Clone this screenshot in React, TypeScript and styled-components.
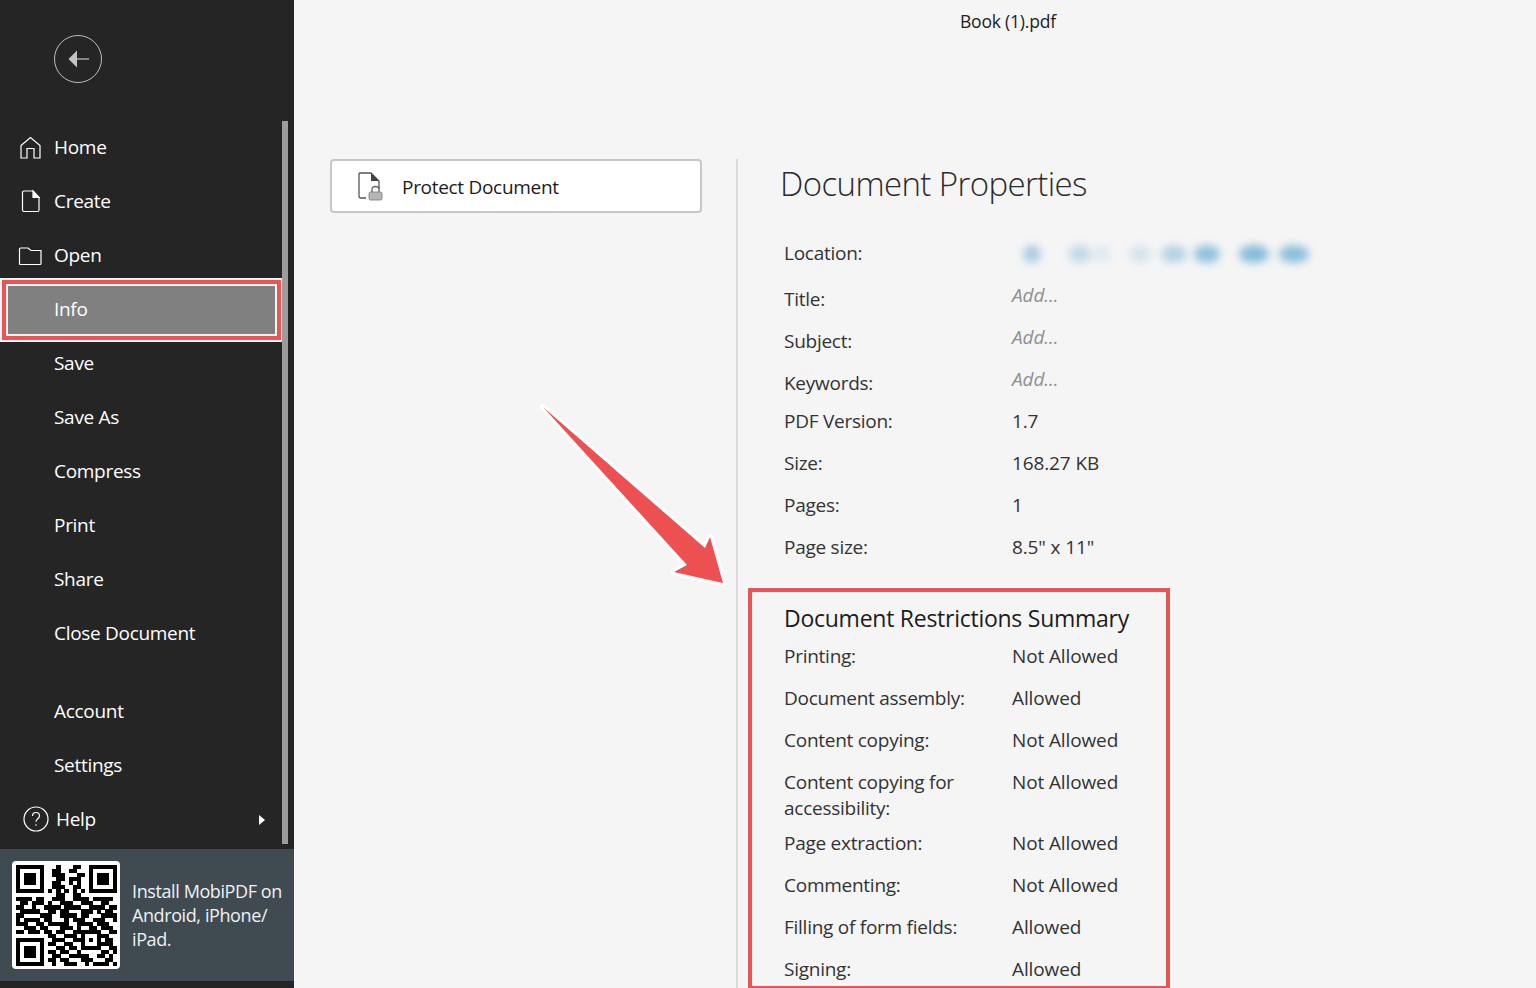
import React from "react";
import styled, { createGlobalStyle } from "styled-components";

const Global = createGlobalStyle`
  html, body { margin: 0; padding: 0; background: #f5f5f5; overflow: hidden; }
  body { font-family: "Open Sans", "Noto Sans", sans-serif; }
`;

const Page = styled.div`
  position: relative;
  display: flex;
  width: 1536px;
  height: 988px;
  overflow: hidden;
  background: #f5f5f5;
`;

const Sidebar = styled.aside`
  position: relative;
  flex: 0 0 294px;
  width: 294px;
  height: 988px;
  background: #252525;
  display: flex;
  flex-direction: column;
`;

const BackRow = styled.div`
  height: 120px;
  padding: 35px 0 0 54px;
  box-sizing: border-box;
`;

const Nav = styled.nav`
  display: flex;
  flex-direction: column;
`;

const NavItem = styled.div<{ $active?: boolean; $gapTop?: number }>`
  position: relative;
  height: 54px;
  margin-top: ${(p) => p.$gapTop ?? 0}px;
  display: flex;
  align-items: center;
  padding-left: 54px;
  width: 282px;
  box-sizing: border-box;
  color: #fff;
  font-size: 19px;
  letter-spacing: -0.3px;
  background: ${(p) => (p.$active ? "#808080" : "transparent")};
`;

const ActiveFrame = styled.div`
  position: absolute;
  left: 0;
  top: -4px;
  width: 283px;
  height: 64px;
  box-sizing: border-box;
  border: 2px solid #f3f3f3;
  pointer-events: none;
  &::before {
    content: "";
    position: absolute;
    inset: 0;
    border: 4px solid #e95454;
  }
  &::after {
    content: "";
    position: absolute;
    inset: 4px;
    border: 2px solid #f3f3f3;
  }
`;

const NavIcon = styled.svg<{ $left?: number }>`
  position: absolute;
  left: ${(p) => p.$left ?? 18}px;
  top: 14px;
  width: 26px;
  height: 26px;
  fill: none;
  stroke: #fff;
  stroke-width: 1.2;
`;

const HelpLabel = styled.span`
  margin-left: 2px;
`;

const Caret = styled.span`
  position: absolute;
  left: 259px;
  top: 23px;
  width: 0;
  height: 0;
  border-left: 6px solid #fff;
  border-top: 5px solid transparent;
  border-bottom: 5px solid transparent;
`;

const Scrollbar = styled.div`
  position: absolute;
  left: 282px;
  top: 121px;
  width: 6px;
  height: 723px;
  background: #9c9c9c;
`;

const Promo = styled.div`
  position: absolute;
  left: 0;
  top: 849px;
  width: 294px;
  height: 132px;
  background: #3f4a51;
  display: flex;
  align-items: center;
  padding-left: 12px;
  box-sizing: border-box;
  gap: 12px;
`;

const QrCard = styled.div`
  width: 108px;
  height: 108px;
  background: #fff;
  border-radius: 4px;
  display: flex;
  align-items: center;
  justify-content: center;
  flex: none;
`;

const PromoText = styled.div`
  color: #f0f2f3;
  font-size: 18px;
  line-height: 24px;
  letter-spacing: -0.4px;
  width: 156px;
`;

const Main = styled.main`
  flex: 1;
  position: relative;
  display: flex;
  flex-direction: column;
`;

const FileName = styled.div`
  height: 159px;
  box-sizing: border-box;
  padding-top: 9px;
  padding-left: 666px;
  font-size: 17.5px;
  line-height: 24px;
  letter-spacing: -0.2px;
  color: #222;
`;

const Columns = styled.div`
  display: flex;
  flex: 1;
`;

const LeftCol = styled.div`
  width: 444px;
  box-sizing: border-box;
  padding-left: 36px;
  border-right: 2px solid #dcdcdc;
`;

const ProtectButton = styled.div`
  width: 372px;
  height: 54px;
  box-sizing: border-box;
  border: 2px solid #c6c6c6;
  border-radius: 4px;
  background: #fff;
  display: flex;
  align-items: center;
  padding: 2px 0 0 24px;
  gap: 18px;
  font-size: 19px;
  letter-spacing: -0.3px;
  color: #1c1c1c;
`;

const ProtectIcon = styled.svg`
  margin-top: -2px;
`;

const RightCol = styled.div`
  flex: 1;
  padding-left: 42px;
`;

const Heading = styled.h1`
  margin: 0;
  font-size: 33px;
  font-weight: 300;
  line-height: 50px;
  letter-spacing: -0.6px;
  color: #2b2b2b;
`;

const Props = styled.div`
  padding: 0 0 0 4px;
  margin-top: 31px;
`;

const Row = styled.div<{ $h: number }>`
  display: grid;
  grid-template-columns: 228px 1fr;
  height: ${(p) => p.$h}px;
  font-size: 19px;
  line-height: 26px;
  letter-spacing: -0.26px;
  color: #333;
`;

const Value = styled.span`
  letter-spacing: -0.12px;
`;

const Placeholder = styled.span`
  font-style: italic;
  color: #8f8f8f;
  letter-spacing: -0.1px;
  transform: translateY(-4px);
`;

const Blurred = styled.svg`
  width: 320px;
  height: 40px;
  margin: -7px 0 0 -12px;
`;

const RestrictBox = styled.section`
  position: absolute;
  left: 454px;
  top: 588px;
  width: 422px;
  height: 400px;
  box-sizing: border-box;
  border: 4px solid #e95454;
  border-bottom-width: 2px;
  outline: 1px solid #fbfbfb;
  padding: 11px 0 0 32px;
`;

const RestrictTitle = styled.div`
  font-size: 23px;
  line-height: 30px;
  letter-spacing: -0.26px;
  color: #1c1c1c;
  margin-bottom: 10px;
`;

const Arrow = styled.svg`
  position: absolute;
  left: 240px;
  top: 395px;
  width: 200px;
  height: 200px;
  overflow: visible;
`;

const qrRows = [
  "1111111" + "00010001100" + "1111111",
  "1000001" + "00110011000" + "1000001",
  "1011101" + "00111000110" + "1011101",
  "1011101" + "00011011100" + "1011101",
  "1011101" + "00110010100" + "1011101",
  "1000001" + "00111001100" + "1000001",
  "1111111" + "01010101010" + "1111111",
  "0000000" + "00011001100" + "0000000",
  "1111011001110011110111110",
  "0110111010011100111001100",
  "1100100111101111001111011",
  "0111110011011000111010110",
  "1100001110011110110001111",
  "1011110110001011100111001",
  "1110011011111001111011100",
  "0011101100011101001101110",
  "1101110110110011" + "11111" + "0011",
  "00000000" + "11001110" + "10001" + "1100",
  "1111111" + "0" + "01110011" + "10101" + "0110",
  "1000001" + "0" + "11001100" + "10001" + "1110",
  "1011101" + "0" + "00110110" + "11111" + "0011",
  "1011101" + "0" + "11011001" + "00000" + "1101",
  "1011101" + "0" + "01100111" + "11001" + "1010",
  "1000001" + "0" + "11011000" + "11100" + "0110",
  "1111111" + "0" + "01001110" + "01011" + "1101",
];

function QrCode() {
  const n = qrRows.length;
  return (
    <svg width="101" height="101" viewBox={`0 0 ${n} ${n}`} shapeRendering="crispEdges">
      {qrRows.flatMap((r, y) =>
        r.split("").map((c, x) => (c === "1" ? <rect key={`${x}-${y}`} x={x} y={y} width="1.02" height="1.02" fill="#000" /> : null))
      )}
    </svg>
  );
}

const rows1: [string, string, number][] = [
  ["PDF Version:", "1.7", 42],
  ["Size:", "168.27 KB", 42],
  ["Pages:", "1", 42],
  ["Page size:", '8.5" x 11"', 42],
];

const rows2: [React.ReactNode, string, number][] = [
  ["Printing:", "Not Allowed", 42],
  ["Document assembly:", "Allowed", 42],
  ["Content copying:", "Not Allowed", 42],
  [<>Content copying for<br />accessibility:</>, "Not Allowed", 61],
  ["Page extraction:", "Not Allowed", 42],
  ["Commenting:", "Not Allowed", 42],
  ["Filling of form fields:", "Allowed", 42],
  ["Signing:", "Allowed", 42],
];

const blobs: [number, number, number][] = [
  [32, 9, 0.5], [80, 11, 0.34], [102, 9, 0.14], [140, 11, 0.2], [174, 13, 0.42], [207, 13, 0.65], [254, 15, 0.72], [294, 15, 0.68],
];

export default function App() {
  return (
    <Page>
      <Global />
      <Sidebar>
        <BackRow>
          <svg width="48" height="48" viewBox="0 0 48 48" fill="none">
            <circle cx="24" cy="24" r="23.5" stroke="#bdbdbd" strokeWidth="1" />
            <path d="M14.500 24 L23 15.500 V32.500 Z" fill="#c4c4c4" />
            <path d="M22 24 H35" stroke="#c4c4c4" strokeWidth="1.2" />
          </svg>
        </BackRow>
        <Nav>
          <NavItem>
            <NavIcon viewBox="0 0 26 26">
              <path d="M3 11.5 L12.5 3.5 L22 11.5 V24 H16 V14.500 H9 V24 H3 Z" />
            </NavIcon>
            Home
          </NavItem>
          <NavItem>
            <NavIcon viewBox="0 0 26 26">
              <path d="M4.500 4.500 Q4.500 3 6 3 H15 L21 9.5 V22 Q21 23.500 19.500 23.500 H6 Q4.500 23.500 4.500 22 Z" />
              <path d="M15 3 L21 9.5 H15 Z" fill="#fff" />
            </NavIcon>
            Create
          </NavItem>
          <NavItem>
            <NavIcon viewBox="0 0 26 26">
              <path d="M1.500 7 Q1.500 6 2.500 6 H10 L13 8.500 H23 V21.500 Q23 22.500 22 22.500 H2.500 Q1.500 22.500 1.500 21.500 Z" />
            </NavIcon>
            Open
          </NavItem>
          <NavItem $active>
            Info
            <ActiveFrame />
          </NavItem>
          <NavItem>Save</NavItem>
          <NavItem>Save As</NavItem>
          <NavItem>Compress</NavItem>
          <NavItem>Print</NavItem>
          <NavItem>Share</NavItem>
          <NavItem>Close Document</NavItem>
          <NavItem $gapTop={24}>Account</NavItem>
          <NavItem>Settings</NavItem>
          <NavItem>
            <NavIcon viewBox="0 0 26 26" $left={23}>
              <circle cx="13" cy="13" r="12" />
              <path d="M9.500 10 Q9.500 6.500 13 6.500 Q16.500 6.500 16.500 9.800 Q16.500 11.800 14.500 12.900 Q13 13.800 13 15.800" />
              <circle cx="13" cy="19" r="0.800" fill="#fff" stroke="none" />
            </NavIcon>
            <HelpLabel>Help</HelpLabel>
            <Caret />
          </NavItem>
        </Nav>
        <Scrollbar />
        <Promo>
          <QrCard>
            <QrCode />
          </QrCard>
          <PromoText>Install MobiPDF on Android, iPhone/ iPad.</PromoText>
        </Promo>
      </Sidebar>
      <Main>
        <FileName>Book (1).pdf</FileName>
        <Columns>
          <LeftCol>
            <ProtectButton>
              <ProtectIcon width="28" height="32" viewBox="0 0 28 32" fill="none">
                <path d="M4 3 H15 L23 11 V19 M10 28 H5 Q3 28 3 26 V4 Q3 3 4 3" stroke="#555" strokeWidth="1.300" />
                <path d="M15 3 L23 11 H15 Z" fill="#444" />
                <rect x="13" y="22" width="13" height="8" rx="1.500" fill="#b5b5b5" stroke="#777" strokeWidth="0.800" />
                <path d="M16 22 V19.500 Q16 16.500 19.500 16.500 Q23 16.500 23 19.500 V22" stroke="#666" strokeWidth="1.300" />
              </ProtectIcon>
              Protect Document
            </ProtectButton>
          </LeftCol>
          <RightCol>
            <Heading>Document Properties</Heading>
            <Props>
              <Row $h={46}>
                <span>Location:</span>
                <Blurred viewBox="0 0 320 40">
                  <defs>
                    <filter id="blur" x="-20%" y="-60%" width="140%" height="220%"><feGaussianBlur stdDeviation="4.500" /></filter>
                  </defs>
                  <g filter="url(#blur)" fill="#5aa5d0">
                    {blobs.map(([x, r, o], i) => (
                      <ellipse key={i} cx={x} cy="21" rx={r} ry="9" opacity={o} />
                    ))}
                  </g>
                </Blurred>
              </Row>
              <Row $h={42}>
                <span>Title:</span>
                <Placeholder>Add...</Placeholder>
              </Row>
              <Row $h={42}>
                <span>Subject:</span>
                <Placeholder>Add...</Placeholder>
              </Row>
              <Row $h={38}>
                <span>Keywords:</span>
                <Placeholder>Add...</Placeholder>
              </Row>
              {rows1.map(([l, v, h]) => (
                <Row key={l} $h={h}>
                  <span>{l}</span>
                  <Value>{v}</Value>
                </Row>
              ))}
            </Props>
          </RightCol>
        </Columns>
        <RestrictBox>
          <RestrictTitle>Document Restrictions Summary</RestrictTitle>
          {rows2.map(([l, v, h], i) => (
            <Row key={i} $h={h}>
              <span>{l}</span>
              <Value>{v}</Value>
            </Row>
          ))}
        </RestrictBox>
        <Arrow viewBox="0 0 200 200">
          <path
            d="M9 12 L171 153 L176 142 L189 188 L140 177 L153 170 Z"
            fill="#ec5050"
            stroke="#fff"
            strokeWidth="6"
            strokeLinejoin="round"
            paintOrder="stroke"
          />
        </Arrow>
      </Main>
    </Page>
  );
}
